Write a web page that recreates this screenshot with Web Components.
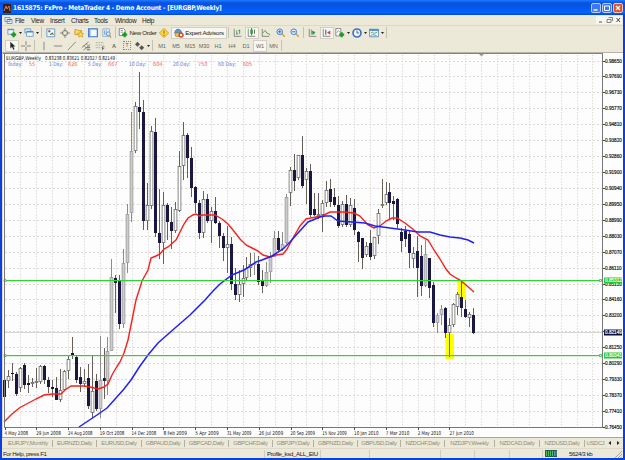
<!DOCTYPE html>
<html lang="en">
<head>
<meta charset="utf-8">
<title>1615875: FxPro - MetaTrader 4</title>
<style>
    body {
        margin: 0;
        width: 625px;
        height: 460px;
        overflow: hidden;
        font-family: "Liberation Sans", Arial, sans-serif;
        font-size: 6.5px;
        color: #222;
    }
</style>
</head>
<body>
<terminal-window>
    <title-bar slot="title">1615875: FxPro - MetaTrader 4 - Demo Account - [EURGBP,Weekly]</title-bar>
    <menu-bar slot="menu">
        <span style="width:16px">File</span><span style="width:19px">View</span><span style="width:21px">Insert</span><span style="width:23px">Charts</span><span style="width:21px">Tools</span><span style="width:27px">Window</span><span>Help</span>
    </menu-bar>
    <tool-bar slot="tools">
        <tool-button icon="newchart" w="18" drop></tool-button>
        <tool-button icon="profiles" w="17" drop></tool-button>
        <tool-sep></tool-sep>
        <tool-button icon="market" w="14"></tool-button>
        <tool-button icon="target" w="14"></tool-button>
        <tool-button icon="navigator" w="14"></tool-button>
        <tool-button icon="terminal" w="14"></tool-button>
        <tool-button icon="tester" w="14"></tool-button>
        <tool-sep></tool-sep>
        <tool-button icon="order" w="39">New Order</tool-button>
        <tool-button icon="diamond" w="14"></tool-button>
        <tool-button icon="expert" w="56" on>Expert Advisors</tool-button>
        <tool-sep></tool-sep>
        <tool-button icon="bars" w="14"></tool-button>
        <tool-button icon="candles" w="14" on></tool-button>
        <tool-button icon="line" w="15"></tool-button>
        <tool-button icon="zoomin" w="15"></tool-button>
        <tool-button icon="zoomout" w="13"></tool-button>
        <tool-sep></tool-sep>
        <tool-button icon="scroll" w="14"></tool-button>
        <tool-button icon="shift" w="14" on></tool-button>
        <tool-button icon="indicator" w="17" drop></tool-button>
        <tool-button icon="clock" w="17" drop></tool-button>
        <tool-button icon="template" w="17" drop></tool-button>
        <tool-sep></tool-sep>
    </tool-bar>
    <tool-bar slot="tools">
        <tool-button icon="cursor" w="14" on></tool-button>
        <tool-button icon="cross" w="14"></tool-button>
        <tool-sep></tool-sep>
        <tool-button icon="vline" w="14"></tool-button>
        <tool-button icon="hline" w="14"></tool-button>
        <tool-button icon="trend" w="14"></tool-button>
        <tool-button icon="channel" w="14"></tool-button>
        <tool-button icon="fibo" w="14"></tool-button>
        <tool-button w="14"><b>A</b></tool-button>
        <tool-button icon="label" w="12">T</tool-button>
        <tool-button icon="arrows" w="18" drop></tool-button>
        <tool-sep></tool-sep>
        <tool-button w="14">M1</tool-button>
        <tool-button w="14">M5</tool-button>
        <tool-button w="14">M15</tool-button>
        <tool-button w="14">M30</tool-button>
        <tool-button w="14">H1</tool-button>
        <tool-button w="14">H4</tool-button>
        <tool-button w="14">D1</tool-button>
        <tool-button w="14" on>W1</tool-button>
        <tool-button w="13">MN</tool-button>
        <tool-sep></tool-sep>
    </tool-bar>
    <price-chart slot="chart"></price-chart>
    <chart-tabs slot="tabs"></chart-tabs>
    <status-bar slot="status">
        <span slot="help">For Help, press F1</span>
        <span slot="profile">Profile_ksd_ALL_EIU</span>
        <span slot="traffic">5624/3 kb</span>
    </status-bar>
</terminal-window>

<script>
function attach(el, html) {
    el.attachShadow({ mode: 'open' });
    const template = document.createElement('template');
    template.innerHTML = html;
    el.shadowRoot.appendChild(template.content.cloneNode(true));
}

// window frame
class TerminalWindow extends HTMLElement {
    constructor() {
        super();
        attach(this, `
            <style>
                :host {
                    display: grid;
                    grid-template-rows: 15px 10px 27px 386px 10px 10px;
                    box-sizing: border-box;
                    width: 625px;
                    height: 460px;
                    border: solid #0c3fe0;
                    border-width: 0 2px 2px;
                    background: #ece9d8;
                }
                .title { margin: 0 -2px; }
                .tools { display: grid; grid-template-rows: 13px 13px; border-top: 1px solid #dcd8c6; box-sizing: border-box; }
            </style>
            <div class="title"><slot name="title"></slot></div>
            <slot name="menu"></slot>
            <div class="tools"><slot name="tools"></slot></div>
            <slot name="chart"></slot>
            <slot name="tabs"></slot>
            <slot name="status"></slot>
        `);
    }
}

class TitleBar extends HTMLElement {
    constructor() {
        super();
        attach(this, `
            <style>
                :host {
                    display: flex;
                    align-items: center;
                    box-sizing: border-box;
                    height: 15px;
                    padding: 1px 2px 0 3px;
                    gap: 2px;
                    background: linear-gradient(#1c7cff 0, #0a50df 20%, #0558ee 55%, #0264ff 85%, #0344cf 100%);
                    color: #fff;
                    font: bold 6.5px "DejaVu Sans Condensed", "DejaVu Sans", sans-serif;
                }
                .text { flex: 1; white-space: nowrap; letter-spacing: -.18px; }
                svg { display: block; }
                .buttons { display: flex; gap: 1px; }
            </style>
            <svg width="8" height="9" viewBox="0 0 8 9"><rect width="8" height="9" fill="#35201c"/><path d="M1 7 3 2l1 3 2-3 1 5" stroke="#d87852" fill="none"/></svg>
            <div class="text"><slot></slot></div>
            <div class="buttons">
                <svg width="10" height="10"><rect x=".5" y=".5" width="9" height="9" rx="1.5" fill="#3c76f0" stroke="#b6cdfa"/><path d="M2.5 7h4" stroke="#fff" stroke-width="1.5"/></svg>
                <svg width="10" height="10"><rect x=".5" y=".5" width="9" height="9" rx="1.5" fill="#3c76f0" stroke="#b6cdfa"/><path d="M2.5 3h5v4.500h-5z" stroke="#fff" fill="none"/></svg>
                <svg width="10" height="10"><rect x=".5" y=".5" width="9" height="9" rx="1.5" fill="#e3512b" stroke="#f4c6b8"/><path d="m3 3 4 4m0-4-4 4" stroke="#fff" stroke-width="1.3"/></svg>
            </div>
        `);
    }
}

class MenuBar extends HTMLElement {
    constructor() {
        super();
        attach(this, `
            <style>
                :host { display: flex; align-items: center; height: 10px; padding: 0 1px 0 2px; letter-spacing: -.3px; }
                .icon { margin-right: 2px; }
                ::slotted(span) { white-space: nowrap; }
                .buttons { margin-left: auto; display: flex; background: #f8f7f2; }
                svg { display: block; }
            </style>
            <svg class="icon" width="9" height="9" viewBox="0 0 9 9"><path d="M1 1.500h5v4H1zM3 3.500h5v4H3z" fill="#eef4fb" stroke="#6f9ccd"/><path d="M3 3.500h5" stroke="#3b79c6"/></svg>
            <slot></slot>
            <div class="buttons">
                <svg width="9" height="8"><path d="M3 6h3" stroke="#555"/></svg>
                <svg width="9" height="8"><path d="M3.500 1.500h4v3h-1M2 3.500h4v3H2z" stroke="#666" fill="none" stroke-width=".8"/></svg>
                <svg width="8" height="8"><path d="m2.500 2 3.500 4m0-4-3.500 4" stroke="#444"/></svg>
            </div>
        `);
    }
}

class ToolBar extends HTMLElement {
    constructor() {
        super();
        attach(this, `
            <style>
                :host { display: flex; align-items: center; padding-left: 3px; }
            </style>
            <slot></slot>
        `);
    }
}

class ToolSep extends HTMLElement {
    constructor() {
        super();
        attach(this, `
            <style>
                :host { display: block; width: 1px; height: 11px; margin: 0 2px 0 1px; background: #c5c2b3; }
            </style>
        `);
    }
}

const mini = '<path d="M1.500 1v9H10" stroke="#777" fill="none"/>';
const lens = '<path d="m6.500 6.500 4 4" stroke="#d9a93a" stroke-width="2"/><circle cx="4.500" cy="4.500" r="3.400" fill="#d8eafc" stroke="#4f82cf" stroke-width="1.200"/>';
const plus = '<path d="M8 5v6M5 8h6" stroke="#159a22" stroke-width="2.600"/>';
const icons = {
    newchart: '<path d="M1 1.500h7v6H1z" fill="#edf4fb" stroke="#6996c4"/><path d="M1 2h7" stroke="#3f7ecb"/>' + plus,
    profiles: '<path d="M1 1h7v5H1z" fill="#d5e7fa" stroke="#6996c4"/><path d="M3 4.500h8v5.500H3z" fill="#f4f8fd" stroke="#6996c4"/><path d="M3 4.500h8" stroke="#4480ca" stroke-width="1.500"/>',
    market: '<path d="M1 1h9.500v9.500H1z" fill="#edf6fc" stroke="#578fc5"/><path d="m3 3 2 2m2 1 2 2" stroke="#d33" stroke-width="1.500"/><path d="m3 5 2-2m0 5 3-2" stroke="#2a9b40" stroke-width="1.500"/>',
    target: '<circle cx="6" cy="6" r="3.200" fill="none" stroke="#777"/><path d="M6 0v4.500M6 7.500V12M0 6h4.500M7.500 6H12" stroke="#777"/>',
    navigator: '<path d="M1 2h3l1 1h4v5H1z" fill="#f7d667" stroke="#c59a30"/><path d="m8 4 1.200 2.300 2.500.300-1.800 1.800.5 2.600L8 9.800 5.700 11l.4-2.600-1.700-1.800 2.500-.300z" fill="#ffdd43" stroke="#c08c20" stroke-width=".7"/>',
    terminal: '<path d="M.7 1h10.500v9.500H.7z" fill="#f2f8ff" stroke="#3d7ac5" stroke-width="1.400"/><path d="M2 2v8" stroke="#79a9df" stroke-width="2"/>',
    tester: '<path d="M1 1h8v9H1z" fill="#e4eefa" stroke="#8aa9cc"/><path d="M3 3v5m2-6v6" stroke="#74a0d0"/><circle cx="7.500" cy="7" r="2.400" fill="#d5e8f9" stroke="#5a88c0"/><path d="m9 9 2 2.500" stroke="#c99b35" stroke-width="1.500"/>',
    order: '<path d="M1.500.5h5l2 2V9h-7z" fill="#fff" stroke="#777"/><path d="M3 3h3M3 5h3" stroke="#999"/>' + plus,
    diamond: '<path d="m6 .5 5.500 5.500L6 11.500.5 6z" fill="#ffd83c" stroke="#cb941d"/><path d="M6 3v4m0 1v1.500" stroke="#a06815" stroke-width="1.300"/>',
    expert: '<path d="M1 6c0-6 8-6 8 0z" fill="#5b98dc" stroke="#3b6ca8"/><path d="M1 6h9v4H2z" fill="#f2c456" stroke="#b58730"/><circle cx="8.500" cy="8.500" r="3.200" fill="#de3d25"/><path d="M7.200 7.200h2.600v2.600H7.200z" fill="#fff"/>',
    bars: mini + '<path d="M4.500 3v5m0-1H6M8 2v5M6.500 3H8" stroke="#2c9040"/>',
    candles: mini + '<path d="M5.500 0v9" stroke="#2c7035"/><path d="M4 2h3v5H4z" fill="#24a538"/><path d="M9 2v5" stroke="#555"/>',
    line: mini + '<path d="m2 6 3-3 2 3 4 2" fill="none" stroke="#388e47"/>',
    zoomin: lens + '<path d="M4.500 2.500v4m-2-2h4" stroke="#2c63b5"/>',
    zoomout: lens + '<path d="M2.500 4.500h4" stroke="#2c63b5"/>',
    scroll: mini + '<path d="M4 2v6M7 4v4" stroke="#777"/><path d="m5 3 4 2.500L5 8z" fill="#29963d"/>',
    shift: mini + '<path d="M4.500 2v6" stroke="#4775b8" stroke-width="1.500"/><path d="M10 3v5L6 5.500z" fill="#c24c30"/>',
    indicator: '<path d="M1 .5h6v9H1z" fill="#fff" stroke="#777"/><path d="M2 6 4 3l2 2" fill="none" stroke="#999"/>' + plus,
    clock: '<circle cx="6" cy="6" r="4.800" fill="#eaf4ff" stroke="#3973c5" stroke-width="2"/><path d="M6 3v3h2.500" fill="none" stroke="#456"/>',
    template: '<path d="M.5 1.500h11v9H.5z" fill="#edf5fd" stroke="#5487c0"/><path d="M.5 2.500h11" stroke="#4a86d1" stroke-width="2"/><path d="m2 6 2-1 2 1.500L10 5M2 9l3-1 4 1" fill="none" stroke="#4c9b60"/>',
    cursor: '<path d="M4 1v8l2-2 1.500 3.500L9 10 7.500 6.500H10z" fill="#222"/>',
    cross: '<path d="M6 0v5M6 7v5M0 6h5M7 6h5" stroke="#777"/>',
    vline: '<path d="M6 1v10" stroke="#777"/>',
    hline: '<path d="M1 6h10" stroke="#777"/>',
    trend: '<path d="m1 11 9.500-10" stroke="#777"/>',
    channel: '<path d="m1 8 8-7M3 11l8-7M3 5l4 4M6 3l4 4" stroke="#777"/><path d="M7 8h4M7 10.500h4" stroke="#555"/>',
    fibo: '<path d="M1 2h10M1 5h10M1 8h7" stroke="#888" stroke-dasharray="1 1"/><path d="M9 7v4m0-4h2.500M9 9h2" stroke="#666"/>',
    arrows: '<path d="m3 1 3 3-3 3-3-3zM8 5l3 3-3 3-3-3z" fill="#555"/>'
};

class ToolButton extends HTMLElement {
    constructor() {
        super();
        const icon = this.getAttribute('icon');
        const boxed = icon === 'label';
        const wide = this.getAttribute('w') > 20;
        attach(this, `
            <style>
                :host {
                    display: flex;
                    align-items: center;
                    justify-content: center;
                    box-sizing: border-box;
                    flex: none;
                    gap: 1px;
                    height: 12px;
                    width: ${this.getAttribute('w')}px;
                    white-space: nowrap;
                    font-size: ${wide ? 6.1 : 5.6}px;
                    letter-spacing: ${wide ? '-.25px' : '-.1px'};
                    color: ${wide ? '#222' : '#666'};
                }
                :host([on]) { background: #f7f6f1; border: 1px solid #d2cfc0; }
                svg { display: block; flex: none; }
                .box { border: 1px dotted #888; padding: 0 1px; line-height: 7px; }
            </style>
            ${icons[icon] ? `<svg width="10" height="10" viewBox="0 0 12 12">${icons[icon]}</svg>` : ''}
            <span class="${boxed ? 'box' : ''}"><slot></slot></span>
            ${this.hasAttribute('drop') ? '<svg width="3" height="2"><path d="M0 0h3L1.500 2z" fill="#222"/></svg>' : ''}
        `);
    }
}

// one weekly candle: high, low, body top, body bottom (screen y), colour
const candles = `378 398 380 397 d|370 388 376 381 w|363 381 373 374 d|372 396 374 394 d|367 392 368 388 w|363 389 365 385 d
375 393 383 385 d|378 387 382 384 w|368 388 381 383 w|365 384 366 382 w|365 384 366 380 d|377 393 380 387 d
380 397 387 389 d|377 400 388 400 d|369 402 390 400 w|370 391 371 390 w|356 379 359 371 w|337 359 353 355 d
356 383 357 380 d|367 392 377 384 d|369 387 381 384 w|364 409 378 406 d|356 418 391 413 w|374 411 381 409 d
336 418 380 409 g|348 399 378 381 d|337 395 351 381 g|259 351 277 351 g|275 313 278 283 d|275 329 281 324 d
249 328 263 324 g|204 273 214 263 g|112 222 151 213 g|102 153 106 151 w|72 129 107 112 d|100 230 112 221 d
183 230 205 221 w|126 209 131 206 w|118 237 132 233 d|189 259 233 243 d|192 264 205 243 w|203 240 205 222 d
207 249 222 231 d|202 233 209 231 w|151 212 166 211 w|122 180 135 166 w|133 178 135 158 d|147 197 158 188 d
186 213 187 203 d|200 239 203 233 d|191 238 199 233 w|194 223 199 221 d|207 243 211 221 w|197 224 211 223 d
221 248 223 236 d|233 261 236 248 d|226 273 244 248 w|237 290 244 284 d|268 300 284 295 d|270 302 284 295 w
265 297 278 284 w|257 280 268 278 w|253 277 264 268 w|253 275 263 265 g|256 285 264 282 d|270 293 281 286 d
262 287 272 286 g|252 283 257 272 g|231 257 238 257 g|231 251 238 250 d|232 251 244 249 g|194 244 197 243 g
167 206 170 193 w|154 191 170 181 d|155 180 155 178 w|136 188 155 186 d|168 204 171 180 w|164 217 171 215 d
193 216 209 215 d|193 219 214 216 w|200 232 203 215 w|181 207 190 203 w|179 207 189 202 d|188 207 197 205 d
196 228 205 226 d|201 227 204 225 w|195 227 204 225 d|198 227 205 225 w|199 235 208 230 d|231 262 232 242 d
238 269 238 258 d|242 257 246 255 w|230 260 243 257 d|237 259 237 256 w|209 244 213 236 w|179 208 204 206 w
182 205 194 203 w|183 220 192 203 d|196 220 201 204 d|198 228 199 224 d|228 252 232 241 d|226 247 231 239 d
230 268 234 253 d|247 268 253 259 w|236 297 251 268 d|245 296 256 286 d|240 287 254 286 g|258 298 258 288 d
282 327 285 323 d|313 333 315 323 g|305 325 309 315 g|307 338 308 333 d|318 357 325 333 w|303 327 304 325 w
292 315 294 307 w|282 317 297 308 d|300 318 309 317 d|312 327 314 318 w|308 334 315 333 d`
    .split(/[|\n]/).map(c => c.trim().split(' '));

const maFast = '4,422 12,414 20,407.500 36,399 44,395 52,394 61,394 65,390 71,386 84,386 90,387 98,389 104,387 108,384 112,375 116,368 120,362 124,353 128,340 132,320 136,300 142,281 148,270 151,258 156,256 160,254 164,249 168,247 176,240 180,232 184,224 188,218 193,215 196,214 199,216 203,215 215,215 222,219 228,224 233,230 240,239 246,245 254,249 258,251 263,255 270,257 276,255 283,254 287,249 293,238 300,226 306,219 316,217 322,216 330,212 344,212 354,213 360,216 368,225 374,228 380,226 386,221 392,218 397,218 405,223 414,230 420,236 428,240 434,250 440,259 446,269 450,274 456,278 460,280 466,285 474,292';
const maSlow = '79,427 88,421 97,415 107,408 116,398 124,389 131,380 140,366 148,355 158,343 175,328 190,315 205,300 213,291 220,284 232,275 244,270 256,262 262,260 272,256 283,249 290,242 298,233 308,222 320,217 325,216 331,216 338,221 352,222 365,223 375,226 390,228 405,230 418,232 430,232 440,235 450,237 460,238 468,240 474,243';
const prices = ['0.98650', '0.97690', '0.96730', '0.95770', '0.94810', '0.93820', '0.92860', '0.91900', '0.90940', '0.89950', '0.88990', '0.88030', '0.87070', '0.86110', '0.85120', '0.84160', '0.83200', '', '0.81250', '0.80290', '0.79330', '0.78370', '0.77410', '0.76450'];
const dates = ['4 May 2008', '29 Jun 2008', '24 Aug 2008', '19 Oct 2008', '14 Dec 2008', '8 Feb 2009', '5 Apr 2009', '31 May 2009', '26 Jul 2009', '20 Sep 2009', '15 Nov 2009', '10 Jan 2010', '7 Mar 2010', '2 May 2010', '27 Jun 2010'];
// ranges: label, x, width, value, x, width
const ranges = [['Today:', 7.5, 15, '55', 29, 6], ['1 Day:', 49, 14, '626', 68, 9.5], ['5 Day:', 88, 14, '667', 108, 9.5], ['10 Day:', 129, 17, '604', 153, 9.5], ['20 Day:', 173, 17, '753', 198, 9.5], ['60 Day:', 218, 18, '605', 243, 9]];

class PriceChart extends HTMLElement {
    constructor() {
        super();
        attach(this, `
            <style>
                :host { display: block; height: 386px; }
                svg { display: block; }
                text { font: 5.3px "DejaVu Sans", sans-serif; fill: #111; }
                .price { font: 4.7px "Liberation Sans", sans-serif; stroke-width: .15px; stroke: currentColor; }
            </style>
            <svg width="621" height="386" viewBox="2 52 621 386">${this.draw()}</svg>
        `);
    }

    text(x, y, w, label, fill = '#111') {
        return `<text x="${x}" y="${y}" textLength="${w}" lengthAdjust="spacingAndGlyphs" style="fill:${fill}">${label}</text>`;
    }

    price(y, label, fill = '#111') {
        return `<text class="price" x="605" y="${y}" style="fill:${fill};color:${fill}">${label}</text>`;
    }

    draw() {
        let out = '<rect x="2" y="52" width="621" height="386" fill="#fdfdfd"/><path d="M2 52.500h621" stroke="#b5b3a5"/><path d="M3 53.500h600" stroke="#858580"/><path d="M2.500 53v385" stroke="#d8d5c8"/>';
        for (let i = 1; i < 38; i++) {
            const x = Math.round(4.5 + i * 15.89) + 0.5;
            out += `<path d="M${x} 55V427" stroke="#e0dbd6" stroke-dasharray="1.500 1.500"/>`;
        }
        prices.forEach((p, i) => {
            const y = Math.round(60.5 + i * 15.93) + 0.5;
            if (i < 23) out += `<path d="M5 ${y}H602" stroke="#dcdad8" stroke-dasharray="2 2"/>`;
            out += `<path d="M602 ${y}h3" stroke="#444"/>`;
            if (p) out += this.price(y + 1.8, p);
        });
        out += '<path d="M5 332.500H602" stroke="#d6d6d6"/>';
        out += '<path d="M457.500 281h8v18h-8zM445.500 334h8.500v25h-8.500z" fill="#ff0"/>';
        candles.forEach(([hi, lo, top, bottom, kind], i) => {
            const x = Math.round(4.7 + i * 3.972 - 0.5);
            const h = Math.max(1, bottom - top);
            out += `<path d="M${x + 0.5} ${hi}V${lo}" stroke="${kind === 'g' ? '#8c8c8c' : '#666058'}"/>`;
            if (kind === 'd') out += `<rect x="${x - 1}" y="${top}" width="3" height="${h}" fill="#1a1842"/>`;
            else out += `<rect x="${x - 0.9}" y="${+top + 0.5}" width="2.800" height="${Math.max(1, h - 1)}" fill="${kind === 'g' ? '#ccc' : '#fff'}" stroke="${kind === 'g' ? '#9a9a9a' : '#6a6a68'}" stroke-width=".8"/>`;
        });
        out += `<polyline points="${maFast}" fill="none" stroke="#f8201c" stroke-width="1.400"/>`;
        out += `<polyline points="${maSlow}" fill="none" stroke="#2020f4" stroke-width="1.500"/>`;
        out += '<rect x="5" y="280" width="596" height="1.200" fill="#35d035"/><rect x="5" y="355" width="596" height="1.200" fill="#35d035"/>';
        out += '<path d="M4 279.500h2v2H4zM599.500 279.500h2v2h-2zM4 354.500h2v2H4zM599.500 354.500h2v2h-2z" fill="#fff" stroke="#29c332" stroke-width=".8"/>';
        out += '<path d="M4.500 54V427.500H602.500V54" fill="none" stroke="#777"/><path d="M479 54h5l-2.500 2.500z" fill="#999"/>';
        // price tags on the axis
        [[280.5, '0.85312', '#27c730'], [332.5, '0.82149', '#111030'], [355.5, '0.80341', '#27c730']].forEach(([y, p, c]) => {
            out += `<rect x="604" y="${y - 3}" width="18" height="6" fill="${c}"/>` + this.price(y + 1.7, p, '#fff');
        });
        dates.forEach((d, i) => {
            const x = 4.5 + i * 31.78;
            out += `<path d="M${Math.round(x) + 0.5} 427v3" stroke="#555"/>` + this.text(x, 434.7, d.length > 10 ? 24.5 : 23.5, d);
        });
        out += this.text(6, 59.8, 35, 'EURGBP,Weekly') + this.text(45, 59.8, 70, '0.83238 0.83621 0.82027 0.82149');
        ranges.forEach(([l, x, w, v, vx, vw]) => {
            out += this.text(x, 65.6, w, l, '#5578e0') + this.text(vx, 65.6, vw, v, '#f4574c');
        });
        return out + '<path d="M2 437.500h621" stroke="#aaa799"/>';
    }
}

const tabs = [['EURJPY,Monthly', 49], ['EURNZD,Daily', 44], ['EURUSD,Daily', 45], ['GBPAUD,Daily', 43], ['GBPCAD,Daily', 44], ['GBPCHF,Daily', 44], ['GBPJPY,Daily', 41], ['GBPNZD,Daily', 44], ['GBPUSD,Daily', 43], ['NZDCHF,Daily', 44], ['NZDJPY,Weekly', 50], ['NZDCAD,Daily', 45], ['NZDUSD,Daily', 45], ['USDCJ', 21]];

class ChartTabs extends HTMLElement {
    constructor() {
        super();
        attach(this, `
            <style>
                :host { display: flex; align-items: center; height: 10px; padding-left: 2px; color: #8c8a7e; font-size: 5.8px; letter-spacing: -.3px; }
                span { box-sizing: border-box; flex: none; line-height: 7px; text-align: center; border-right: 1px solid #b3b0a2; white-space: nowrap; }
                span:last-of-type { border: 0; }
                svg { margin-left: 1px; }
            </style>
            ${tabs.map(([t, w]) => `<span style="width:${w}px">${t}</span>`).join('')}
            <svg width="14" height="6"><path d="M4 1v4L1.500 3zM10 1v4l2.500-2z" fill="#222"/></svg>
        `);
    }
}

class StatusBar extends HTMLElement {
    constructor() {
        super();
        attach(this, `
            <style>
                :host {
                    display: grid;
                    grid-template-columns: 262px 56px 49px 71px 34px 35px 33px 1fr 9px;
                    align-items: center;
                    height: 10px;
                    box-sizing: border-box;
                    border-top: 1px solid #dedac9;
                    font-size: 6.1px;
                    letter-spacing: -.38px;
                    white-space: nowrap;
                }
                div { height: 8px; line-height: 8px; padding-left: 2px; border-left: 1px solid #d0cdbd; box-sizing: border-box; }
                div:first-of-type { border: 0; padding-left: 1px; }
                .net { display: flex; align-items: center; gap: 12px; }
            </style>
            <div><slot name="help"></slot></div>
            <div><slot name="profile"></slot></div>
            <div></div><div></div><div></div><div></div><div></div>
            <div class="net">
                <svg width="12" height="7"><rect width="12" height="7" fill="#245d45"/><path d="M1.500 1v5M3.500 1v5M5.500 1v5M7.500 1v5" stroke="#50bf62"/><path d="M9.500 1v5M11 1v5" stroke="#648bc6"/></svg>
                <slot name="traffic"></slot>
            </div>
            <svg width="8" height="8"><path d="m1 8 7-7M4 8l4-4M6.500 8 8 6.500" stroke="#aaa794"/></svg>
        `);
    }
}

window.customElements.define('terminal-window', TerminalWindow);
window.customElements.define('title-bar', TitleBar);
window.customElements.define('menu-bar', MenuBar);
window.customElements.define('tool-bar', ToolBar);
window.customElements.define('tool-sep', ToolSep);
window.customElements.define('tool-button', ToolButton);
window.customElements.define('price-chart', PriceChart);
window.customElements.define('chart-tabs', ChartTabs);
window.customElements.define('status-bar', StatusBar);
</script>
</body>
</html>
